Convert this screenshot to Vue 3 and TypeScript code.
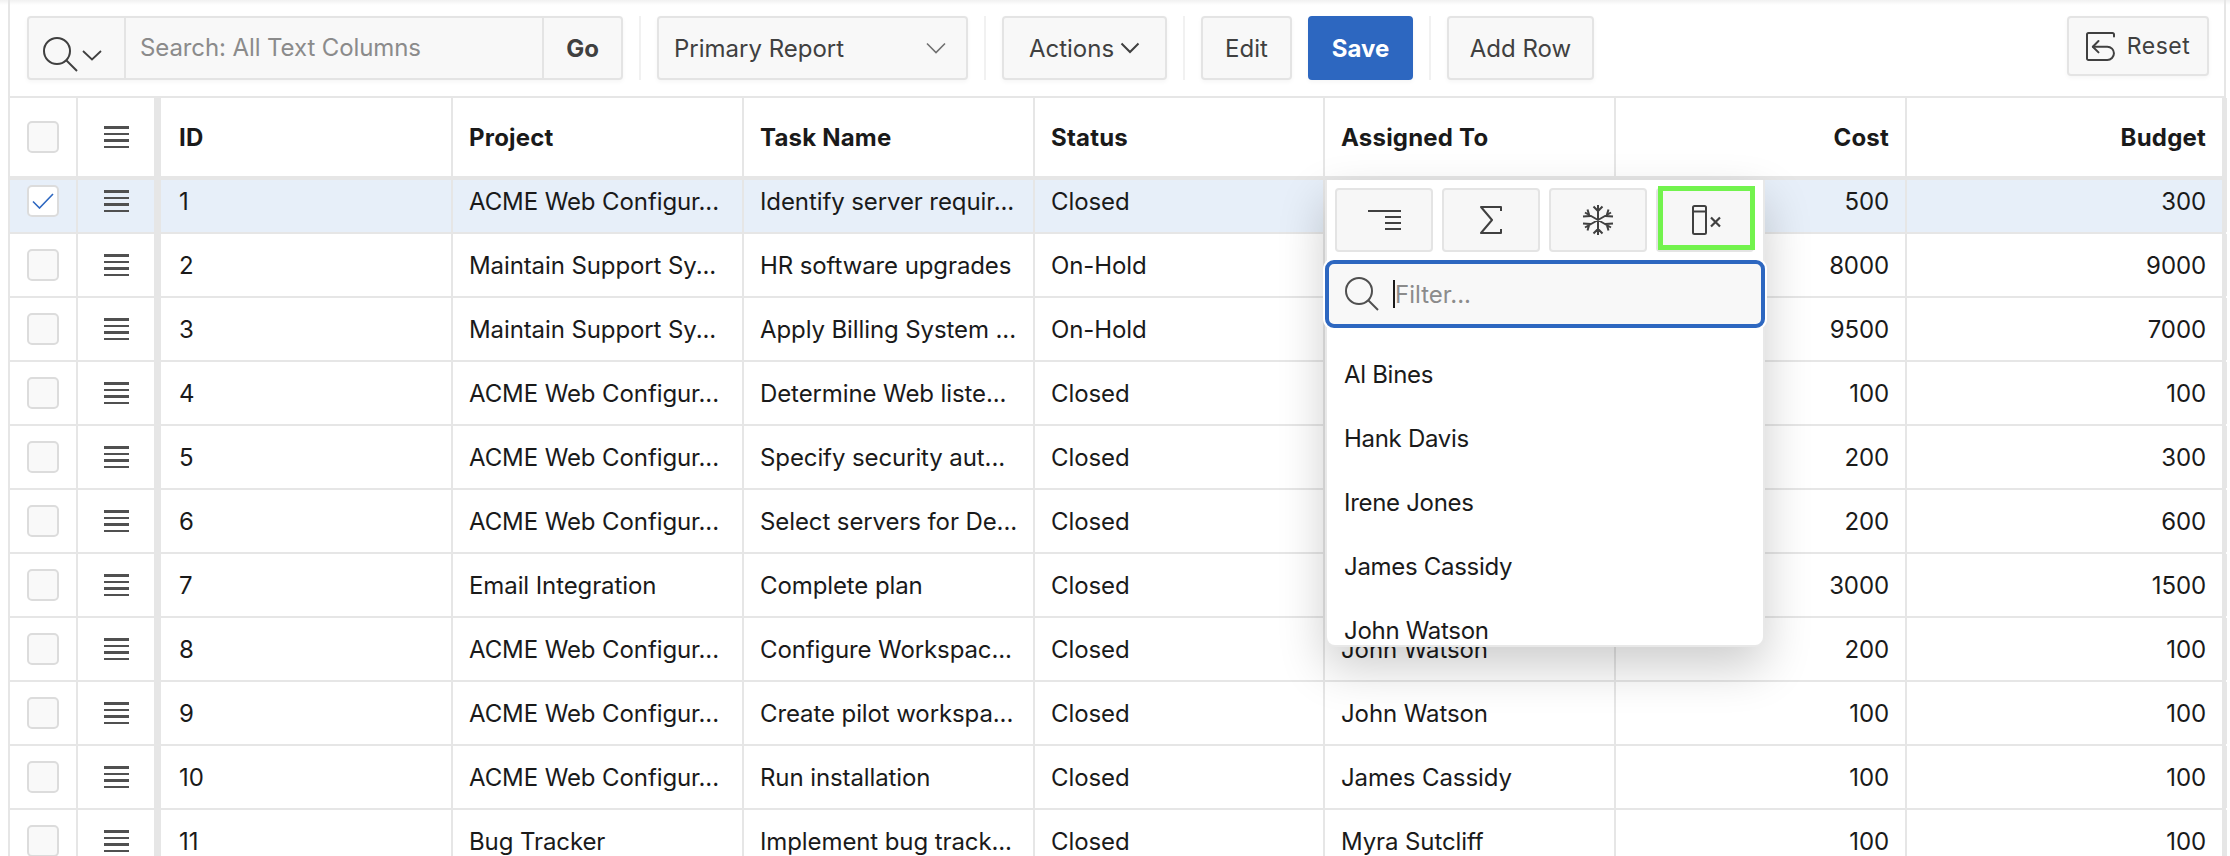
<script setup lang="ts">
interface Row {
  id: number;
  project: string;
  task: string;
  status: string;
  assigned: string;
  cost: number;
  budget: number;
}

const web = 'ACME Web Configur...';
const support = 'Maintain Support Sy...';

const rows: Row[] = [
  { id: 1, project: web, task: 'Identify server requir...', status: 'Closed', assigned: 'Al Bines', cost: 500, budget: 300 },
  { id: 2, project: support, task: 'HR software upgrades', status: 'On-Hold', assigned: 'Hank Davis', cost: 8000, budget: 9000 },
  { id: 3, project: support, task: 'Apply Billing System ...', status: 'On-Hold', assigned: 'Irene Jones', cost: 9500, budget: 7000 },
  { id: 4, project: web, task: 'Determine Web liste...', status: 'Closed', assigned: 'James Cassidy', cost: 100, budget: 100 },
  { id: 5, project: web, task: 'Specify security aut...', status: 'Closed', assigned: 'John Watson', cost: 200, budget: 300 },
  { id: 6, project: web, task: 'Select servers for De...', status: 'Closed', assigned: 'John Watson', cost: 200, budget: 600 },
  { id: 7, project: 'Email Integration', task: 'Complete plan', status: 'Closed', assigned: 'Al Bines', cost: 3000, budget: 1500 },
  { id: 8, project: web, task: 'Configure Workspac...', status: 'Closed', assigned: 'John Watson', cost: 200, budget: 100 },
  { id: 9, project: web, task: 'Create pilot workspa...', status: 'Closed', assigned: 'John Watson', cost: 100, budget: 100 },
  { id: 10, project: web, task: 'Run installation', status: 'Closed', assigned: 'James Cassidy', cost: 100, budget: 100 },
  { id: 11, project: 'Bug Tracker', task: 'Implement bug track...', status: 'Closed', assigned: 'Myra Sutcliff', cost: 100, budget: 100 },
];

const people = ['Al Bines', 'Hank Davis', 'Irene Jones', 'James Cassidy', 'John Watson'];
const headers = ['ID', 'Project', 'Task Name', 'Status', 'Assigned To'];
</script>

<template>
  <div class="page">
    <div class="shell">
      <div class="toolbar">
        <div class="search">
          <button class="search-col">
            <svg width="60" height="36" viewBox="0 0 60 36" fill="none" stroke="#404040" stroke-width="2">
              <circle cx="14" cy="14" r="13" />
              <path d="M23.5 23.5 34 34" />
              <path d="M40 14l9 8.500 9-8.500" stroke-width="1.8" />
            </svg>
          </button>
          <div class="search-input">Search: All Text Columns</div>
          <button class="search-go">Go</button>
        </div>
        <span class="sep"></span>
        <div class="btn select">
          <span>Primary Report</span>
          <svg width="20" height="12" viewBox="0 0 20 12" fill="none" stroke="#707070" stroke-width="1.6"><path d="M1 1.5l9 9 9-9" /></svg>
        </div>
        <span class="sep"></span>
        <button class="btn actions">
          Actions
          <svg width="20" height="12" viewBox="0 0 20 12" fill="none" stroke="#404040" stroke-width="2"><path d="M1.5 1.5l8.5 8.5 8.5-8.5" /></svg>
        </button>
        <span class="sep"></span>
        <button class="btn edit">Edit</button>
        <button class="btn save">Save</button>
        <span class="sep"></span>
        <button class="btn add">Add Row</button>
        <button class="btn reset">
          <svg width="29" height="29" viewBox="0 0 29 29" fill="none" stroke="#404040" stroke-width="2" stroke-linecap="round" stroke-linejoin="round">
            <path d="M28 4.5V2.5A1.5 1.5 0 0 0 26.5 1H2.5A1.5 1.5 0 0 0 1 2.5v24A1.5 1.5 0 0 0 2.5 28H21.3a6.65 6.65 0 0 0 0-13.3H7" />
            <path d="M12.5 9 6.8 14.7l5.7 5.7" />
          </svg>
          Reset
        </button>
      </div>

      <div class="grid">
        <div class="row head">
          <div class="cell check"><span class="box"></span></div>
          <div class="cell menu"><span class="bars"><i></i><i></i><i></i><i></i></span></div>
          <div v-for="h in headers" :key="h" class="cell">{{ h }}</div>
          <div class="cell num">Cost</div>
          <div class="cell num last">Budget</div>
        </div>
        <div v-for="r in rows" :key="r.id" class="row" :class="{ selected: r.id === 1 }">
          <div class="cell check">
            <span class="box">
              <svg v-if="r.id === 1" width="22" height="16" viewBox="0 0 22 16" fill="none" stroke="#2d67c0" stroke-width="1.6"><path d="M1 8.5l6.500 6.500L21 1" /></svg>
            </span>
          </div>
          <div class="cell menu"><span class="bars"><i></i><i></i><i></i><i></i></span></div>
          <div class="cell">{{ r.id }}</div>
          <div class="cell">{{ r.project }}</div>
          <div class="cell">{{ r.task }}</div>
          <div class="cell">{{ r.status }}</div>
          <div class="cell">{{ r.assigned }}</div>
          <div class="cell num">{{ r.cost }}</div>
          <div class="cell num last">{{ r.budget }}</div>
        </div>

        <div class="popup">
          <div class="tools">
            <button class="tool">
              <svg class="nudge" width="34" height="22" viewBox="0 0 34 22" fill="none" stroke="#404040" stroke-width="2"><path d="M0 2h33M17 8h16M17 14h16M17 20h16" /></svg>
            </button>
            <button class="tool">
              <svg width="22" height="28" viewBox="0 0 22 28" fill="none" stroke="#404040" stroke-width="2" stroke-linejoin="round"><path d="M21 5V1H1l11 13L1 27h20v-4" /></svg>
            </button>
            <button class="tool">
              <svg width="32" height="32" viewBox="0 0 32 32" fill="none" stroke="#404040" stroke-width="2"><path d="M16 1v30M3 8.500l26 15M3 23.500l26-15M11.500 2.500 16 7l4.500-4.500M11.500 29.500 16 25l4.500 4.500M1 12.500l6.500-.5-2-6.500M31 12.500l-6.500-.5 2-6.500M1 19.500l6.500.5-2 6.500M31 19.500l-6.500.5 2 6.500" /></svg>
            </button>
            <button class="tool flagged">
              <svg class="nudge wide-nudge" width="30" height="30" viewBox="0 0 30 30" fill="none" stroke="#404040" stroke-width="2"><rect x="1" y="1" width="13" height="28" rx="1.500" /><path d="M1 6.500h13" /><path d="M19 12.500l9 9M28 12.500l-9 9" stroke-width="2.200" /></svg>
              <span class="flag"></span>
            </button>
          </div>
          <div class="filter">
            <svg width="34" height="34" viewBox="0 0 34 34" fill="none" stroke="#505050" stroke-width="2"><circle cx="14" cy="14" r="13" /><path d="M23.500 23.500 33 33" /></svg>
            <span class="caret"></span>
            <span class="filter-text">Filter...</span>
          </div>
          <div class="people">
            <div v-for="p in people" :key="p" class="person">{{ p }}</div>
          </div>
        </div>
      </div>
    </div>
  </div>
</template>

<style scoped>
.page { width: 2230px; height: 856px; overflow: hidden; background: #fff; font-family: Inter, "Liberation Sans", sans-serif; font-size: 24px; color: #1a1a1a; position: relative; }
.page::before { content: ''; display: block; height: 5px; margin-bottom: -5px; background: linear-gradient(#f1f1f1, #fff); }
.shell { width: 2218px; margin-left: 8px; border-left: 2px solid #e6e6e6; border-right: 2px solid #e6e6e6; height: 100%; box-sizing: border-box; }
button { font: inherit; cursor: pointer; }

.toolbar { display: flex; align-items: flex-start; height: 98px; box-sizing: border-box; padding: 16px 0 0 17px; border-bottom: 2px solid #e6e6e6; }
.sep { width: 2px; height: 64px; margin: 0 16px; background: #f1f1f1; flex: none; }
.btn { height: 64px; box-sizing: border-box; display: flex; align-items: center; justify-content: center; background: #f8f8f8; border: 2px solid #e4e4e4; border-radius: 4px; color: #404040; box-shadow: 0 2px 4px rgba(0, 0, 0, .04); }

.search { display: flex; width: 596px; height: 64px; box-sizing: border-box; background: #f8f8f8; border: 2px solid #e4e4e4; border-radius: 4px; box-shadow: 0 2px 4px rgba(0, 0, 0, .04); }
.search-col { width: 97px; border: 0; border-right: 2px solid #e4e4e4; background: none; padding: 13px 0 0 14px; text-align: left; }
.search-col svg { display: block; }
.search-input { flex: 1; color: #8b8b8b; padding-left: 14px; line-height: 60px; letter-spacing: -.1px; }
.search-go { width: 79px; border: 0; border-left: 2px solid #e4e4e4; background: none; font-weight: 700; color: #404040; }

.select { width: 311px; justify-content: space-between; padding: 0 20px 0 15px; }
.actions { width: 165px; gap: 6px; }
.edit { width: 91px; }
.save { width: 105px; margin-left: 16px; background: #2d67c0; border-color: #2d67c0; color: #fff; font-weight: 700; }
.add { width: 147px; }
.reset { width: 142px; height: 60px; margin-left: auto; margin-right: 15px; gap: 12px; font-size: 23px; letter-spacing: .5px; }

.grid { position: relative; }
.row { display: grid; grid-template-columns: 68px 83px 292px 291px 291px 290px 291px 291px 315px; height: 64px; border-bottom: 2px solid #e6e6e6; box-sizing: border-box; background: #fff; align-items: stretch; padding-right: 4px; letter-spacing: -.1px; }
.row.head { position: relative; z-index: 1; height: 82px; border-bottom-width: 4px; font-weight: 700; letter-spacing: .2px; }
.row.head + .row { margin-top: -10px; }
.row.selected { background: #e7eff9; }
.cell { display: flex; align-items: center; padding: 0 16px; border-right: 2px solid #e6e6e6; white-space: nowrap; overflow: hidden; min-width: 0; }
.cell:nth-child(3) { padding-left: 18px; }
.cell.num { justify-content: flex-end; }
.cell.last { border-right: 5px solid #e6e6e6; margin-right: -5px; }
.cell.check { padding: 0 0 0 17px; }
.cell.menu { padding: 0 0 0 26px; border-right: 7px solid #e6e6e6; }
.box { width: 32px; height: 32px; box-sizing: border-box; display: flex; align-items: center; justify-content: center; background: #f9f9f9; border: 2px solid #dcdcdc; border-radius: 5px; }
.selected .box { background: #fff; }
.bars { display: flex; flex-direction: column; gap: 4px; }
.bars i { display: block; width: 25px; height: 2.500px; background: #505050; }

.popup { position: absolute; left: 1315px; top: 82px; z-index: 2; width: 440px; height: 467px; box-sizing: border-box; display: flex; flex-direction: column; background: #fff; border: 2px solid #e8e8e8; border-top: 0; border-radius: 0 0 10px 10px; box-shadow: 0 20px 48px rgba(0, 0, 0, .2); }
.tools { display: flex; gap: 9px; padding: 8px 0 0 8px; }
.tool { position: relative; width: 98px; height: 64px; display: flex; align-items: center; justify-content: center; padding: 0; background: #f7f7f7; border: 2px solid #e4e4e4; border-radius: 4px; }
.nudge { margin-left: 2px; }
.wide-nudge { margin-left: 3px; }
.flag { position: absolute; left: 0; right: -3px; top: -4px; bottom: 0; border: 5px solid #72f34d; }
.filter { display: flex; align-items: center; height: 68px; box-sizing: border-box; margin: 8px -2px 0; padding-left: 16px; background: #f8f8f8; border: 4px solid #2d67c0; border-radius: 9px; box-shadow: 0 0 0 2px #fff; }
.caret { width: 2px; height: 28px; margin-left: 14px; background: #1a1a1a; }
.filter-text { color: #8b8b8b; }
.people { flex: 1; overflow: hidden; margin-top: 15px; letter-spacing: -.3px; }
.person { height: 64px; line-height: 64px; padding-left: 17px; }
</style>
